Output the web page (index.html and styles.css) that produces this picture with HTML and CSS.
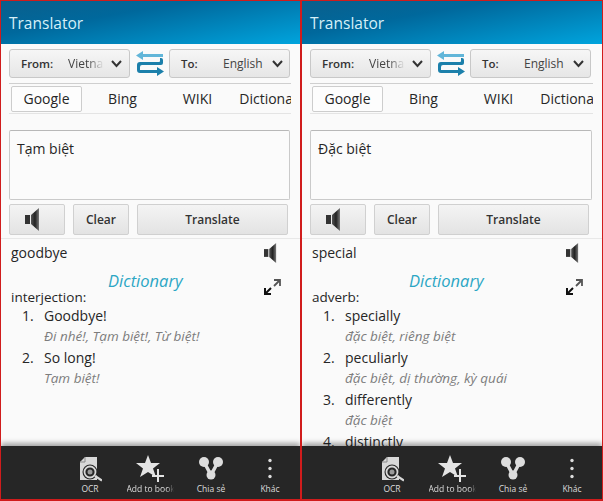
FILE: index.html
```html
<!DOCTYPE html>
<html lang="vi">
<head>
    <meta charset="UTF-8">
    <title>Translator</title>
    <link rel="stylesheet" href="styles.css">
</head>
<body>
    <svg class="defs" width="0" height="0">
        <defs>
            <linearGradient id="speaker-fill" x1="0" x2="1" y1="0" y2="0">
                <stop offset="0" stop-color="#555"/>
                <stop offset="0.5" stop-color="#222"/>
                <stop offset="1" stop-color="#777"/>
            </linearGradient>
            <symbol id="speaker" viewBox="0 0 15 23">
                <rect x="0" y="7" width="5" height="9" fill="#333"/>
                <path d="M6 7 14 0V23L6 16Z" fill="url(#speaker-fill)"/>
            </symbol>
            <symbol id="swap" viewBox="0 0 28 25">
                <path d="M7 0V3H27V6H7V9L0 4.500Z" fill="#62b6d9"/>
                <path d="M20 7H25Q27 7 27 9V12Q27 14 25 14H6Q4 14 4 16V19H21V16L28 20.500 21 25V22H4Q1 22 1 19V14Q1 11 4 11H23Q24 11 24 10V7Z" fill="#1c80ab"/>
            </symbol>
            <symbol id="expand" viewBox="0 0 17 16">
                <path d="M10 1H16V7M16 1 10 7" fill="none" stroke="#555" stroke-width="1.800"/>
                <path d="M1 9V15H7M1 15 7 9" fill="none" stroke="#111" stroke-width="2"/>
            </symbol>
            <symbol id="ocr" viewBox="0 0 24 25">
                <path d="M7 1H19V24H2V6Z" fill="#d8d8d8"/>
                <path d="M7 1V6H2" fill="none" stroke="#8a8a8a"/>
                <circle cx="12" cy="16" r="7.500" fill="#262626"/>
                <circle cx="12" cy="16" r="5.500" fill="none" stroke="#d8d8d8" stroke-width="1.800"/>
                <circle cx="12" cy="16" r="2.500" fill="#9a9a9a"/>
                <path d="M17 20 24 24.500" stroke="#d8d8d8" stroke-width="2.200"/>
            </symbol>
            <symbol id="star-add" viewBox="0 0 28 27">
                <path d="M12 0 15 8H24L17 13.500 20 22 12 17 4 22 7 13.500 0 8H9Z" fill="#e4e4e4"/>
                <path d="M22 14V27M16 21H28" stroke="#e4e4e4" stroke-width="2"/>
            </symbol>
            <symbol id="share" viewBox="0 0 24 23">
                <path d="M5 5 12 18 19 5" fill="none" stroke="#ddd" stroke-width="3.500"/>
                <circle cx="5" cy="5" r="5" fill="#ddd"/>
                <circle cx="19" cy="5" r="5" fill="#ddd"/>
                <circle cx="12" cy="18" r="4.500" fill="#ddd"/>
            </symbol>
            <symbol id="more" viewBox="0 0 4 20">
                <circle cx="2" cy="2" r="1.700" fill="#ddd"/>
                <circle cx="2" cy="10" r="1.700" fill="#ddd"/>
                <circle cx="2" cy="18" r="1.700" fill="#ddd"/>
            </symbol>
        </defs>
    </svg>

    <div class="screens">
        <div class="phone">
            <header class="titlebar">Translator</header>
            <div class="langs">
                <div class="select select-from">
                    <b>From:</b><span class="select-value fade">Vietnamese</span>
                    <svg class="chevron" viewBox="0 0 11 8"><path d="M1 1 5.500 6 10 1" /></svg>
                </div>
                <svg class="swap"><use href="#swap"/></svg>
                <div class="select select-to">
                    <b>To:</b><span class="select-value">English</span>
                    <svg class="chevron" viewBox="0 0 11 8"><path d="M1 1 5.500 6 10 1" /></svg>
                </div>
            </div>
            <div class="tabs">
                <div class="tab active">Google</div>
                <div class="tab">Bing</div>
                <div class="tab">WIKI</div>
                <div class="tab">Dictionary</div>
            </div>
            <div class="input">Tạm biệt</div>
            <div class="actions">
                <div class="btn btn-speak"><svg class="speaker-big"><use href="#speaker"/></svg></div>
                <div class="btn btn-clear">Clear</div>
                <div class="btn btn-translate">Translate</div>
            </div>
            <div class="result">
                <div class="result-head">
                    <span>goodbye</span>
                    <svg class="speaker-small"><use href="#speaker"/></svg>
                </div>
                <div class="dict-head">
                    <span class="dict-title">Dictionary</span>
                    <svg class="expand"><use href="#expand"/></svg>
                </div>
                <div class="word-type">interjection:</div>
                <div class="entry"><span class="num">1.</span><div><div class="word">Goodbye!</div><div class="meaning">Đi nhé!, Tạm biệt!, Từ biệt!</div></div></div>
                <div class="entry"><span class="num">2.</span><div><div class="word">So long!</div><div class="meaning">Tạm biệt!</div></div></div>
            </div>
            <footer class="toolbar">
                <div class="tool"><svg class="tool-ocr"><use href="#ocr"/></svg><span>OCR</span></div>
                <div class="tool"><svg class="tool-star"><use href="#star-add"/></svg><span class="fade-label">Add to book</span></div>
                <div class="tool"><svg class="tool-share"><use href="#share"/></svg><span>Chia sẻ</span></div>
                <div class="tool"><svg class="tool-more"><use href="#more"/></svg><span>Khác</span></div>
            </footer>
        </div>

        <div class="phone">
            <header class="titlebar">Translator</header>
            <div class="langs">
                <div class="select select-from">
                    <b>From:</b><span class="select-value fade">Vietnamese</span>
                    <svg class="chevron" viewBox="0 0 11 8"><path d="M1 1 5.500 6 10 1" /></svg>
                </div>
                <svg class="swap"><use href="#swap"/></svg>
                <div class="select select-to">
                    <b>To:</b><span class="select-value">English</span>
                    <svg class="chevron" viewBox="0 0 11 8"><path d="M1 1 5.500 6 10 1" /></svg>
                </div>
            </div>
            <div class="tabs">
                <div class="tab active">Google</div>
                <div class="tab">Bing</div>
                <div class="tab">WIKI</div>
                <div class="tab">Dictionary</div>
            </div>
            <div class="input">Đặc biệt</div>
            <div class="actions">
                <div class="btn btn-speak"><svg class="speaker-big"><use href="#speaker"/></svg></div>
                <div class="btn btn-clear">Clear</div>
                <div class="btn btn-translate">Translate</div>
            </div>
            <div class="result">
                <div class="result-head">
                    <span>special</span>
                    <svg class="speaker-small"><use href="#speaker"/></svg>
                </div>
                <div class="dict-head">
                    <span class="dict-title">Dictionary</span>
                    <svg class="expand"><use href="#expand"/></svg>
                </div>
                <div class="word-type">adverb:</div>
                <div class="entry"><span class="num">1.</span><div><div class="word">specially</div><div class="meaning">đặc biệt, riêng biệt</div></div></div>
                <div class="entry"><span class="num">2.</span><div><div class="word">peculiarly</div><div class="meaning">đặc biệt, dị thường, kỳ quái</div></div></div>
                <div class="entry"><span class="num">3.</span><div><div class="word">differently</div><div class="meaning">đặc biệt</div></div></div>
                <div class="entry"><span class="num">4.</span><div><div class="word">distinctly</div></div></div>
            </div>
            <footer class="toolbar">
                <div class="tool"><svg class="tool-ocr"><use href="#ocr"/></svg><span>OCR</span></div>
                <div class="tool"><svg class="tool-star"><use href="#star-add"/></svg><span class="fade-label">Add to book</span></div>
                <div class="tool"><svg class="tool-share"><use href="#share"/></svg><span>Chia sẻ</span></div>
                <div class="tool"><svg class="tool-more"><use href="#more"/></svg><span>Khác</span></div>
            </footer>
        </div>
    </div>
</body>
</html>
```

FILE: styles.css
```css
html, body {
    margin: 0;
    height: 501px;
    overflow: hidden;
    background: #fafafa;
}
body {
    font-family: "Open Sans", "Noto Sans", sans-serif;
    color: #262626;
}
.defs {
    position: absolute;
}
.screens {
    display: grid;
    grid-template-columns: 301px 302px;
    height: 501px;
}
.phone {
    display: flex;
    flex-direction: column;
    height: 501px;
    box-sizing: border-box;
    border: 1px solid #d01c1c;
    border-bottom-width: 2px;
    background: #fafafa;
    overflow: hidden;
}
.titlebar {
    height: 43px;
    flex: none;
    box-sizing: border-box;
    padding: 10px 0 0 8px;
    font-size: 15.500px;
    line-height: 24px;
    color: #d6f0f8;
    background: linear-gradient(170deg, #0a5f8c 0%, #00689c 35%, #00a4dd 100%);
}
.langs {
    display: flex;
    align-items: center;
    height: 29px;
    margin: 5px 0 0 8px;
    flex: none;
}
.select {
    display: flex;
    align-items: center;
    width: 121px;
    height: 29px;
    box-sizing: border-box;
    padding-left: 11px;
    border: 1px solid #c8c8c8;
    border-radius: 3px;
    background: linear-gradient(#f6f6f6, #e6e6e6);
    font-size: 12px;
}
.select b {
    flex: none;
    font-size: 11.500px;
    font-weight: 600;
    color: #333;
}
.select-from b {
    width: 47px;
}
.select-to b {
    width: 42px;
}
.select-value {
    flex: none;
    white-space: nowrap;
    overflow: hidden;
    color: #444;
}
.select-from .select-value {
    width: 36px;
}
.select-to .select-value {
    width: 42px;
}
.fade {
    -webkit-mask-image: linear-gradient(90deg, #000 55%, transparent);
}
.chevron {
    width: 11px;
    height: 8px;
    margin-left: 7px;
    fill: none;
    stroke: #333;
    stroke-width: 2;
}
.swap {
    width: 28px;
    height: 25px;
    margin: 0 5px 0 6px;
    flex: none;
}
.tabs {
    display: flex;
    align-items: center;
    height: 31px;
    margin: 5px 9px 0 8px;
    flex: none;
    overflow: hidden;
    border-top: 1px solid #cfcfcf;
    border-bottom: 1px solid #e4e4e4;
    font-size: 14px;
    box-sizing: border-box;
}
.tab {
    width: 75px;
    flex: none;
    text-align: center;
    white-space: nowrap;
}
.tab.active {
    width: 71px;
    height: 26px;
    margin: 0 3px 0 2px;
    box-sizing: border-box;
    line-height: 24px;
    border: 1px solid #cdcdcd;
    border-radius: 2px;
    background: #fdfdfd;
}
.input {
    height: 70px;
    margin: 16px 10px 0 8px;
    flex: none;
    box-sizing: border-box;
    padding: 9px 7px;
    border: 1px solid #cacaca;
    border-top-color: #b8b8b8;
    border-radius: 2px;
    background: #fbfbfb;
    font-size: 14px;
    line-height: 18px;
}
.actions {
    display: flex;
    gap: 8px;
    height: 31px;
    margin: 4px 0 0 8px;
    flex: none;
    padding-bottom: 3px;
}
.btn {
    display: flex;
    align-items: center;
    justify-content: center;
    box-sizing: border-box;
    border: 1px solid #d0d0d0;
    border-radius: 2px;
    background: linear-gradient(#f4f4f4, #e3e3e3);
    font-size: 12px;
    font-weight: 600;
    color: #333;
}
.btn-speak,
.btn-clear {
    width: 56px;
}
.btn-speak {
    padding-right: 10px;
}
.btn-translate {
    width: 151px;
}
.speaker-big {
    width: 15px;
    height: 23px;
}
.result {
    flex: 1;
    min-height: 0;
    overflow: hidden;
    padding-left: 10px;
    border-top: 1px solid #e8e8e8;
    font-size: 14px;
}
.result-head {
    display: flex;
    align-items: center;
    justify-content: space-between;
    height: 27px;
    padding-right: 23px;
}
.speaker-small {
    width: 13px;
    height: 20px;
}
.dict-head {
    display: flex;
    align-items: flex-start;
    height: 23px;
    position: relative;
    padding-right: 19px;
    justify-content: flex-end;
}
.dict-title {
    position: absolute;
    left: 97px;
    top: 3px;
    font-size: 16.500px;
    font-style: italic;
    color: #2ba6c4;
    line-height: 24px;
}
.expand {
    width: 17px;
    height: 16px;
    margin-top: 13px;
}
.word-type {
    font-size: 13.500px;
    line-height: 17px;
}
.entry {
    display: flex;
    margin-left: 11px;
    margin-bottom: 2px;
}
.num {
    width: 22px;
    flex: none;
    line-height: 20px;
}
.word {
    line-height: 20px;
}
.meaning {
    font-size: 13.500px;
    font-style: italic;
    color: #7d7d7d;
    line-height: 20px;
}
.toolbar {
    display: grid;
    grid-template-columns: 56px 64px 58px 60px;
    justify-content: end;
    height: 53px;
    flex: none;
    background: #262626;
    box-shadow: 0 -3px 5px rgba(0, 0, 0, 0.35);
    position: relative;
    font-size: 8.500px;
    color: #dcdcdc;
}
.tool {
    display: flex;
    flex-direction: column;
    align-items: center;
    white-space: nowrap;
    padding-top: 9px;
    box-sizing: border-box;
}
.tool svg {
    height: 27px;
    flex: none;
}
.tool span {
    margin-top: 1px;
    line-height: 12px;
}
.tool-ocr {
    width: 24px;
}
.tool-star {
    width: 28px;
}
.tool-share {
    width: 24px;
}
.tool-more {
    width: 4px;
}
.fade-label {
    width: 47px;
    overflow: hidden;
    -webkit-mask-image: linear-gradient(90deg, #000 85%, transparent);
}
```
